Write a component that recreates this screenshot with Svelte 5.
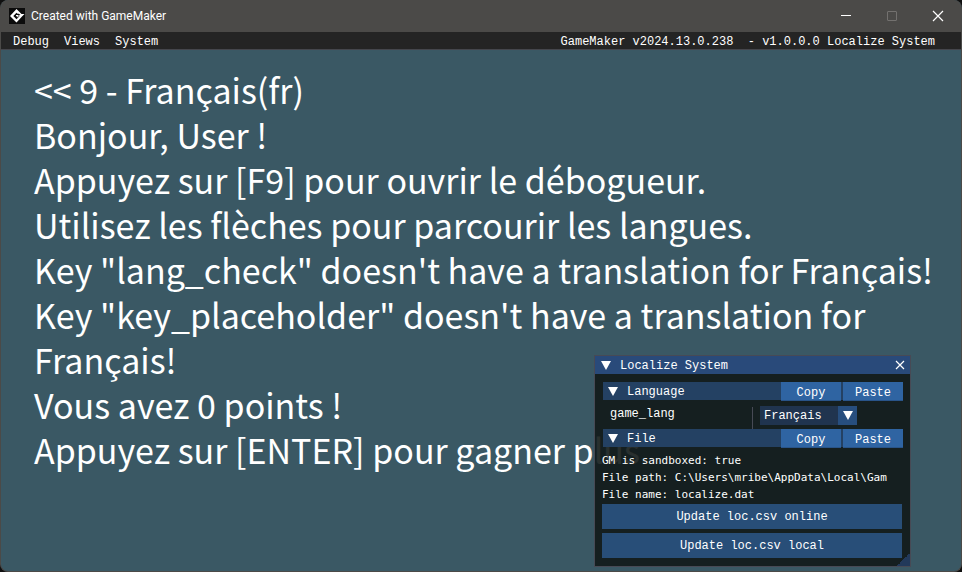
<script>
  const menus = ['Debug', 'Views', 'System'];
  const languages = ['Français', 'English', 'Español'];
  const lines = [
    '<< 9 - Français(fr)',
    'Bonjour, User !',
    'Appuyez sur [F9] pour ouvrir le débogueur.',
    'Utilisez les flèches pour parcourir les langues.',
    'Key "lang_check" doesn\'t have a translation for Français!',
    'Key "key_placeholder" doesn\'t have a translation for Français!',
    'Vous avez 0 points !',
    'Appuyez sur [ENTER] pour gagner plus.'
  ];
  let language = $state('Français');
</script>

{#snippet arrow()}
  <svg class="arrow" viewBox="0 0 10 9" aria-hidden="true"><path d="M0 0H10L5 9Z" fill="#fff" /></svg>
{/snippet}

{#snippet sectionHead(name)}
  <div class="section">
    <button class="fold">{@render arrow()}<span>{name}</span></button>
    <button class="action">Copy</button>
    <button class="action">Paste</button>
  </div>
{/snippet}

<div class="window">
  <header class="titlebar">
    <svg class="logo" viewBox="0 0 16 16" aria-hidden="true">
      <rect width="16" height="16" fill="#0c0c0c" />
      <path d="M7.500 1L12.500 6H15.500L13 8.500L7.500 14.500L1 8Z" fill="#fff" />
      <path d="M7.500 4.800L4.300 8L7.500 11.200L10.300 8.400V7H11.500L9.800 5.800H8.500Z" fill="#0c0c0c" />
      <path d="M7 7H9.500V9.200H8.300V8.300H7Z" fill="#fff" />
    </svg>
    <span class="caption">Created with GameMaker</span>
    <button class="control" aria-label="Minimize">
      <svg viewBox="0 0 10 10"><path d="M0 4.500H10" stroke="#fff" /></svg>
    </button>
    <button class="control" aria-label="Maximize" disabled>
      <svg viewBox="0 0 10 10"><rect x=".5" y=".5" width="9" height="9" rx=".5" fill="none" stroke="#73716f" /></svg>
    </button>
    <button class="control" aria-label="Close">
      <svg viewBox="0 0 10 10"><path d="M0 0L10 10M10 0L0 10" stroke="#fff" stroke-width="1.2" /></svg>
    </button>
  </header>

  <nav class="menubar">
    {#each menus as menu}
      <button>{menu}</button>
    {/each}
    <span class="version">GameMaker v2024.13.0.238&nbsp; - v1.0.0.0 Localize System</span>
  </nav>

  <main>
    {#each lines as line}
      <p>{line}</p>
    {/each}
  </main>

  <section class="panel">
    <div class="panel-title">
      <button aria-label="Collapse">{@render arrow()}</button>
      <span>Localize System</span>
      <button class="close" aria-label="Close panel">
        <svg viewBox="0 0 8 8"><path d="M0 0L8 8M8 0L0 8" stroke="#fff" stroke-width="1.2" /></svg>
      </button>
    </div>
    <div class="panel-body">
      {@render sectionHead('Language')}
      <div class="field">
        <label for="game-lang">game_lang</label>
        <div class="combo">
          <select id="game-lang" bind:value={language}>
            {#each languages as item}
              <option>{item}</option>
            {/each}
          </select>
          <span class="drop">{@render arrow()}</span>
        </div>
      </div>
      {@render sectionHead('File')}
      <div class="info">
        <div>GM is sandboxed: true</div>
        <div>File path: C:\Users\mribe\AppData\Local\Gam</div>
        <div>File name: localize.dat</div>
      </div>
      <button class="update">Update loc.csv online</button>
      <button class="update">Update loc.csv local</button>
    </div>
    <span class="grip"></span>
  </section>
</div>

<style>
  :global(body) {
    margin: 0;
    background: #101010;
  }
  * {
    box-sizing: border-box;
  }
  button,
  select {
    font: inherit;
    color: inherit;
    margin: 0;
    padding: 0;
    border: 0;
    border-radius: 0;
    background: none;
  }
  svg {
    display: block;
  }
  .window {
    position: relative;
    display: flex;
    flex-direction: column;
    height: 100vh;
    overflow: hidden;
    border: 1px solid #4b4a48;
    border-top: 0;
    border-radius: 8px;
    background: #3a5864;
    color: #fff;
    font: 12px/17px 'Liberation Mono', 'DejaVu Sans Mono', monospace;
  }
  .titlebar {
    display: flex;
    align-items: center;
    flex: none;
    height: 32px;
    padding-left: 8px;
    background: #4b4a48;
    font: 12px/16px Roboto, 'Open Sans', sans-serif;
  }
  .logo {
    width: 16px;
    height: 16px;
    margin-right: 6px;
  }
  .caption {
    flex: 1;
  }
  .control {
    display: grid;
    place-items: center;
    width: 46px;
    height: 30px;
  }
  .control svg {
    width: 10px;
    height: 10px;
    overflow: visible;
  }
  .menubar {
    display: flex;
    flex: none;
    gap: 15px;
    height: 18px;
    padding: 2px 26px 0 12px;
    border-bottom: 1px solid #45464c;
    background: #242424;
    line-height: 16px;
  }
  .version {
    margin-left: auto;
    white-space: pre;
  }
  main {
    padding: 17px 24px 0 33px;
    font: 34px/45px 'Noto Sans CJK SC', sans-serif;
  }
  p {
    margin: 0;
  }
  .panel {
    position: absolute;
    top: 355px;
    right: 50px;
    width: 317px;
    border: 1px solid #474a55;
    background: rgba(18, 25, 24, 0.9);
  }
  .panel-title {
    display: flex;
    align-items: center;
    height: 18px;
    padding: 0 6px;
    background: #294a7a;
  }
  .panel-title span {
    margin-left: 9px;
    padding-top: 2px;
  }
  .close {
    margin-left: auto;
  }
  .close svg {
    width: 8px;
    height: 8px;
    overflow: visible;
  }
  .arrow {
    width: 10px;
    height: 9px;
  }
  .panel-body {
    padding: 8px 8px 8px 7px;
  }
  .section {
    display: flex;
    gap: 2px;
    height: 19px;
    margin: 0 -1px 0 1px;
    background: linear-gradient(#244163 18px, transparent 18px);
  }
  .fold {
    display: flex;
    align-items: center;
    flex: 1;
    gap: 9px;
    padding-left: 5px;
    margin-right: -2px;
  }
  .fold span {
    padding-top: 2px;
  }
  .action {
    width: 60px;
    padding-top: 3px;
    background: #2f64a2;
    border-bottom: 1px solid #295489;
  }
  .field {
    display: flex;
    height: 28px;
  }
  label {
    width: 151px;
    height: 22px;
    margin-top: 6px;
    padding-left: 8px;
    border-right: 1px solid #474a55;
    line-height: 15px;
  }
  .combo {
    position: relative;
    width: 97px;
    height: 19px;
    margin: 5px 0 0 7px;
  }
  select {
    appearance: none;
    width: 100%;
    height: 100%;
    padding: 2px 0 0 4px;
    background: #20344f;
  }
  .drop {
    position: absolute;
    top: 0;
    right: 0;
    display: grid;
    place-items: center;
    width: 19px;
    height: 100%;
    background: #274e7e;
    pointer-events: none;
  }
  .info {
    padding: 4px 0 1px;
    font-family: 'DejaVu Sans Mono', monospace;
    font-size: 11px;
    white-space: nowrap;
  }
  .update {
    display: block;
    width: 100%;
    height: 25px;
    padding-top: 2px;
    background: #284e78;
  }
  .update + .update {
    margin-top: 4px;
  }
  .grip {
    position: absolute;
    right: 0;
    bottom: 0;
    width: 13px;
    height: 13px;
    background: linear-gradient(135deg, transparent 50%, #22395a 50%);
  }
</style>
